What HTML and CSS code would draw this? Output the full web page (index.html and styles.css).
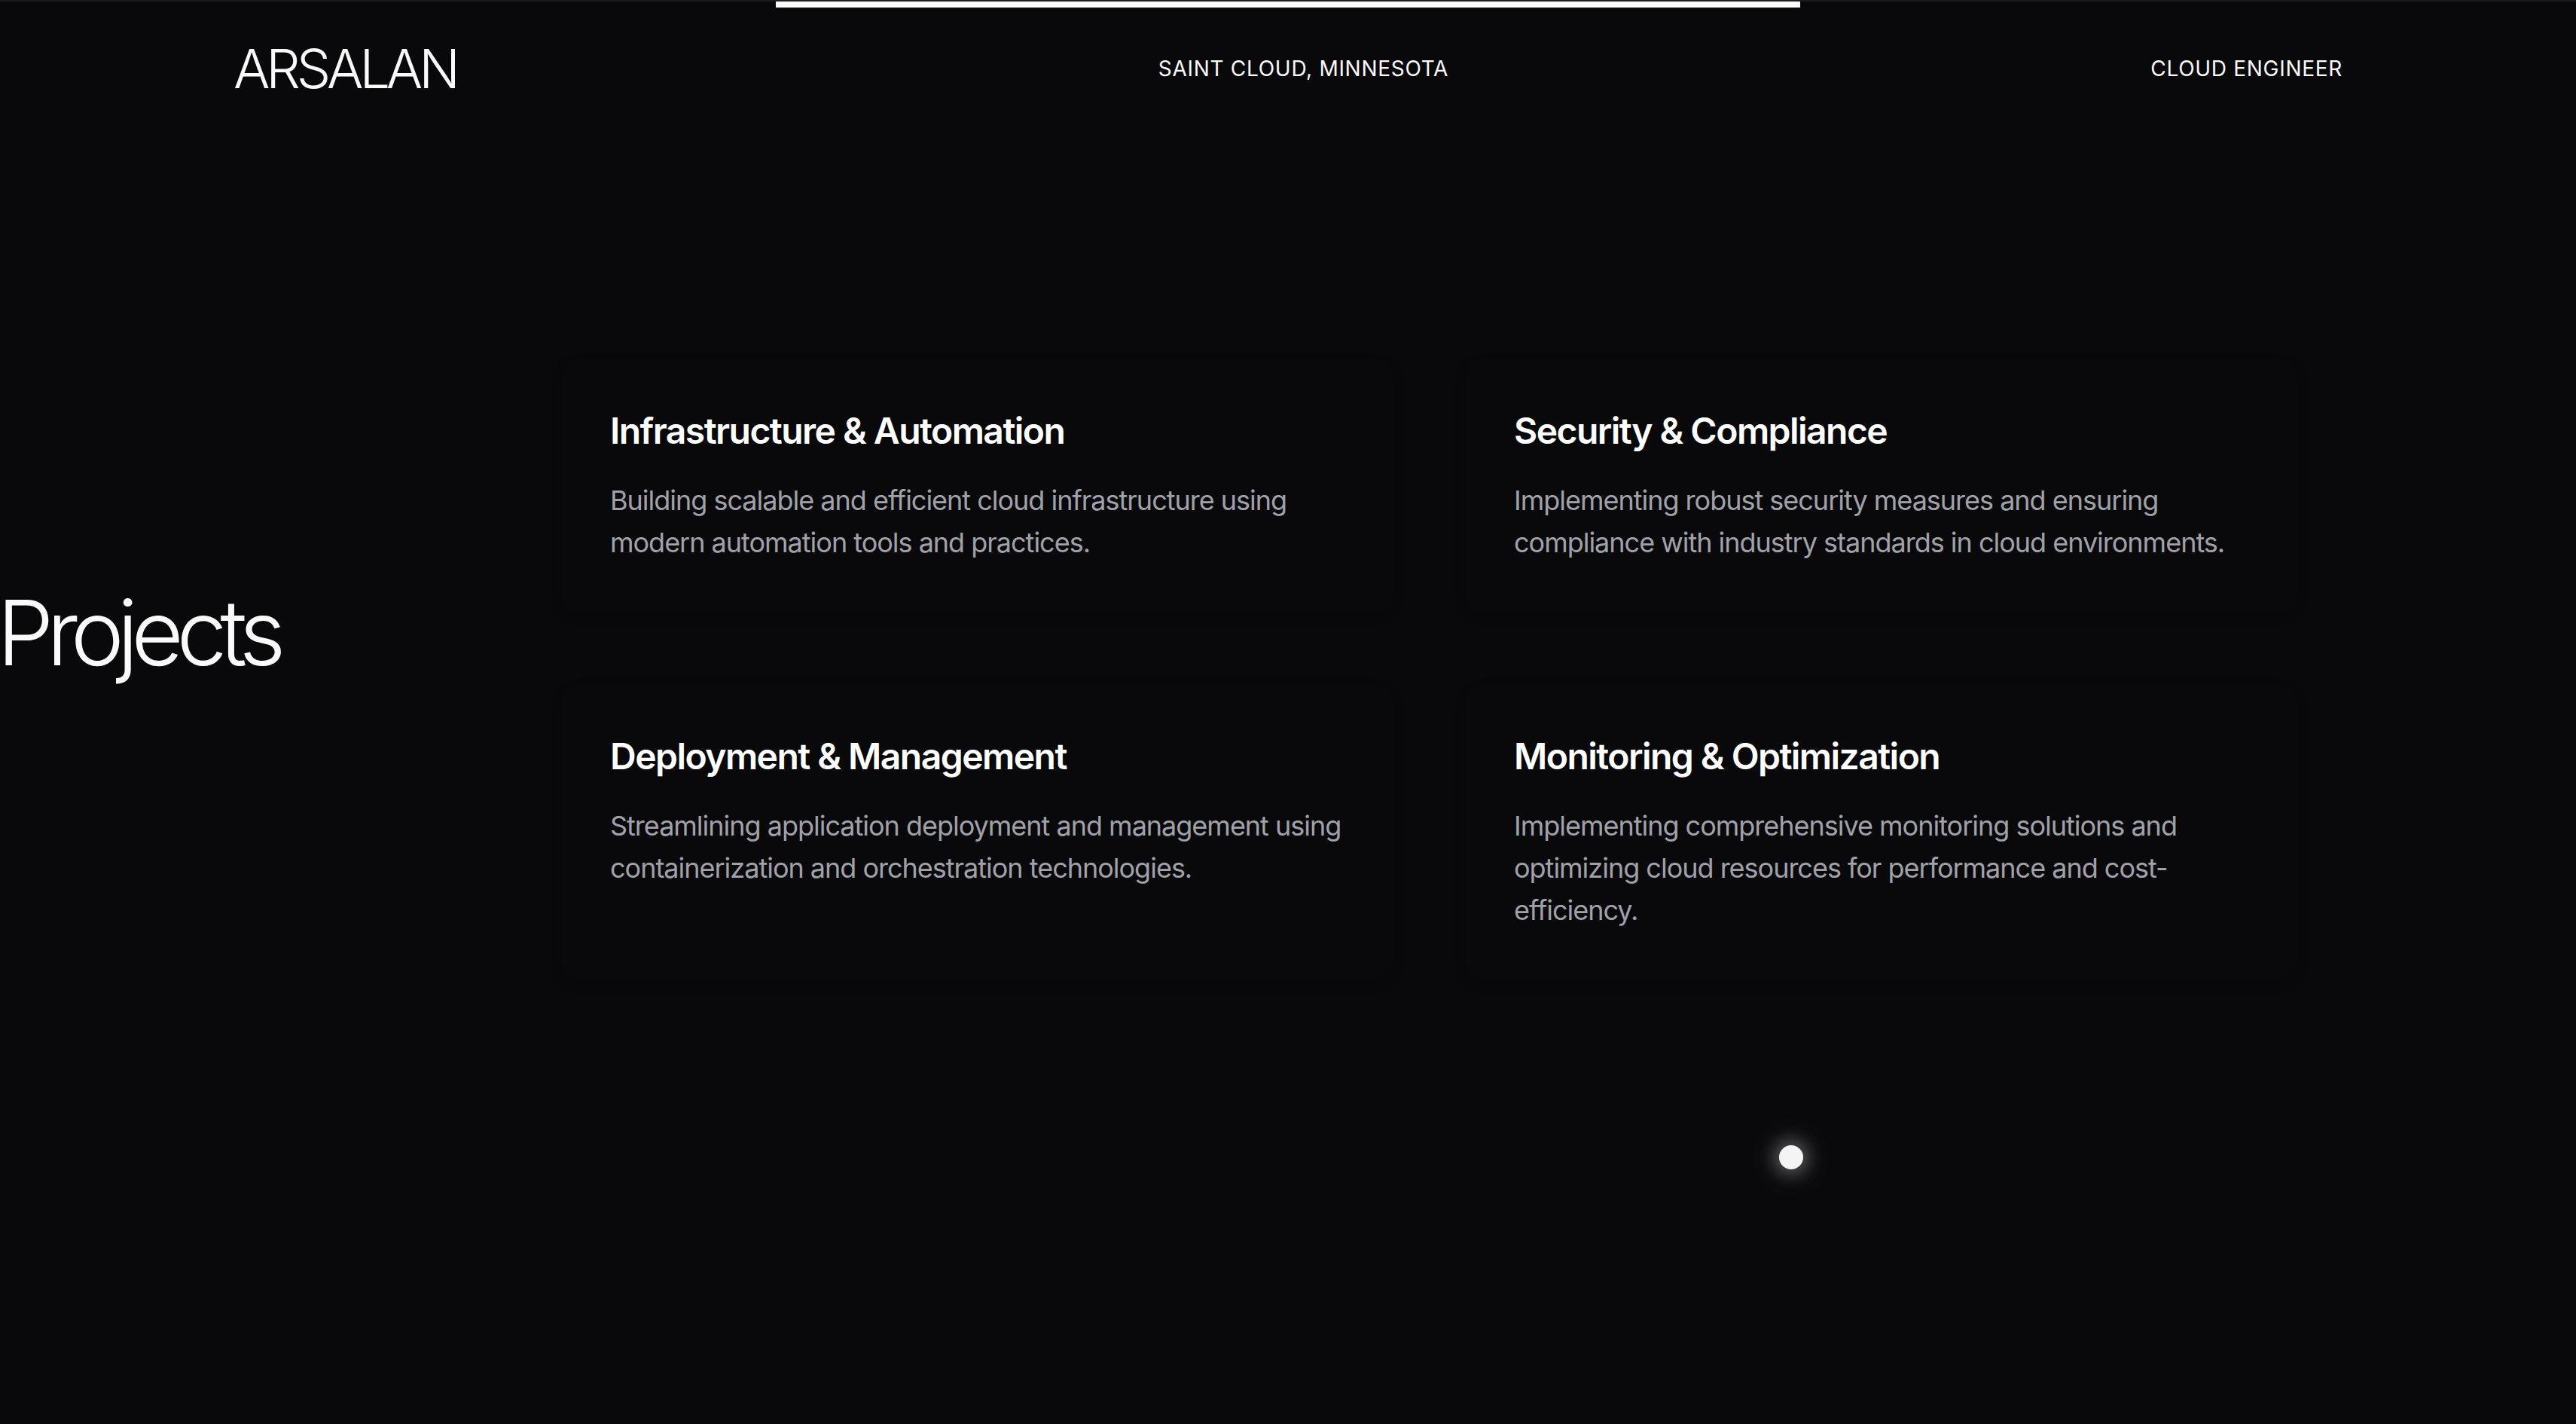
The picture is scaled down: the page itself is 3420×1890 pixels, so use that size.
FILE: index.html
```html
<!DOCTYPE html>
<html lang="en">
<head>
<meta charset="utf-8">
<title>Arsalan — Cloud Engineer</title>
<link rel="stylesheet" href="styles.css">
</head>
<body>
<div class="top-strip"></div>
<div class="progress"></div>
<header class="site-header">
  <div class="logo">ARSALAN</div>
  <div class="meta">SAINT CLOUD, MINNESOTA</div>
  <div class="meta">CLOUD ENGINEER</div>
</header>
<main class="projects">
  <div class="projects-label">
    <h2 class="projects-title">Projects</h2>
  </div>
  <div class="grid">
    <article class="card">
      <h3 class="card-title">Infrastructure &amp; Automation</h3>
      <p class="card-text">Building scalable and efficient cloud infrastructure using modern automation tools and practices.</p>
    </article>
    <article class="card">
      <h3 class="card-title">Security &amp; Compliance</h3>
      <p class="card-text">Implementing robust security measures and ensuring compliance with industry standards in cloud environments.</p>
    </article>
    <article class="card">
      <h3 class="card-title">Deployment &amp; Management</h3>
      <p class="card-text">Streamlining application deployment and management using containerization and orchestration technologies.</p>
    </article>
    <article class="card">
      <h3 class="card-title">Monitoring &amp; Optimization</h3>
      <p class="card-text">Implementing comprehensive monitoring solutions and optimizing cloud resources for performance and cost-efficiency.</p>
    </article>
  </div>
</main>
<div class="cursor"></div>
</body>
</html>
```

FILE: styles.css
```css
* { box-sizing: border-box; }

html, body {
  margin: 0;
  padding: 0;
}

body {
  background: #09090b;
  color: #fafafa;
  font-family: Inter, "Noto Sans", "Liberation Sans", sans-serif;
  min-height: 1890px;
  position: relative;
  overflow: hidden;
}

.top-strip {
  height: 2px;
  background: #1c1c1f;
}

.progress {
  position: absolute;
  top: 2px;
  left: 1030px;
  width: 1360px;
  height: 8px;
  background: #fafafa;
}

.site-header {
  display: flex;
  justify-content: space-between;
  align-items: center;
  padding: 49px 310px;
}

.logo {
  font-size: 72px;
  line-height: 80px;
  font-weight: 300;
  letter-spacing: -0.072em;
}

.meta {
  font-size: 28px;
  line-height: 40px;
  font-weight: 400;
  letter-spacing: 0.025em;
}

.projects {
  display: flex;
  padding-top: 296px;
}

.projects-label {
  width: 746px;
  flex-shrink: 0;
  padding-top: 304px;
}

.projects-title {
  margin: 0 0 0 -4px;
  font-size: 120px;
  line-height: 120px;
  font-weight: 300;
  letter-spacing: -0.078em;
}

.grid {
  width: 2304px;
  display: grid;
  grid-template-columns: 1fr 1fr;
  gap: 96px;
}

.card {
  padding: 64px;
  border-radius: 24px;
  background: rgba(255, 255, 255, 0.002);
  box-shadow: 0 6px 16px rgba(0, 0, 0, 0.12);
}

.card-title {
  margin: 0 0 32px;
  font-size: 48px;
  line-height: 64px;
  font-weight: 600;
  letter-spacing: -0.032em;
  color: #ffffff;
}

.card-text {
  margin: 0;
  font-size: 36px;
  line-height: 56px;
  color: #a1a1aa;
  letter-spacing: -0.028em;
}

.cursor {
  position: absolute;
  left: 2362px;
  top: 1520px;
  width: 32px;
  height: 32px;
  border-radius: 50%;
  background: #f4f4f5;
  box-shadow: 0 0 24px 6px rgba(255, 255, 255, 0.35), 0 0 60px 10px rgba(255, 255, 255, 0.08);
}
```
